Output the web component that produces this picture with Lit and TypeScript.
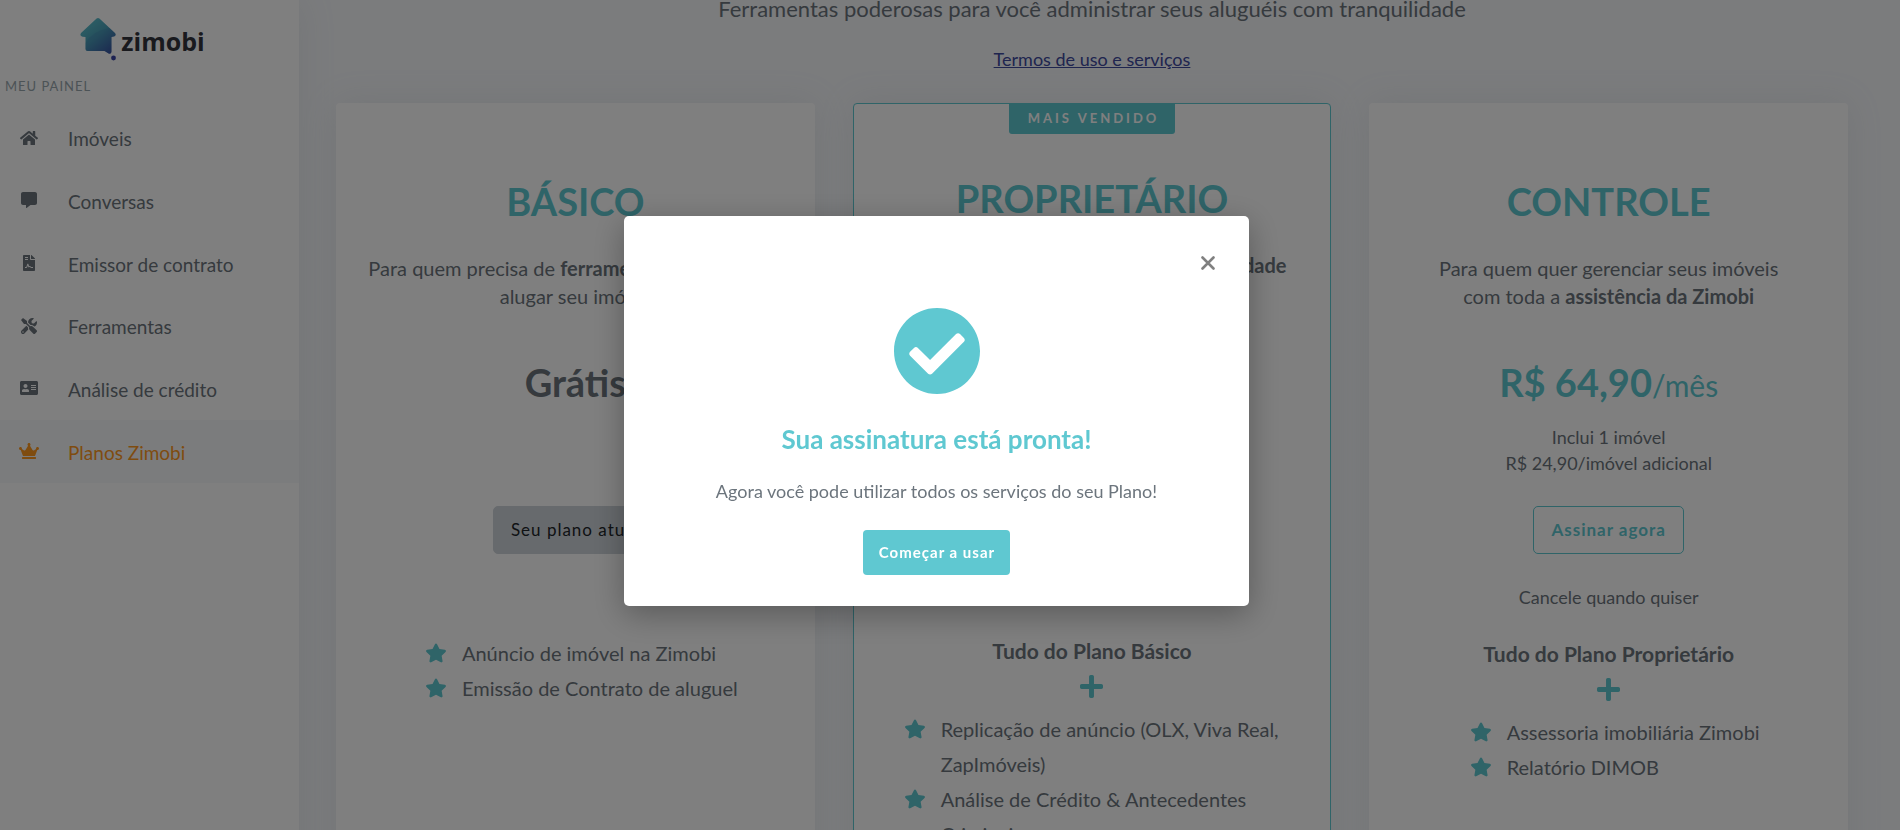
import { LitElement, html, svg, css, nothing } from "lit";
import type { TemplateResult } from "lit";
import { customElement, property, state } from "lit/decorators.js";
import { classMap } from "lit/directives/class-map.js";

type IconName = "home" | "chat" | "contract" | "tools" | "idcard" | "crown" | "star" | "plus" | "check";

const ICONS: Record<IconName, { box: string; d: string }> = {
  home: {
    box: "0 0 576 512",
    d: "M280.37 148.26L96 300.11V464a16 16 0 0 0 16 16l112.06-.29a16 16 0 0 0 15.92-16V368a16 16 0 0 1 16-16h64a16 16 0 0 1 16 16v95.64a16 16 0 0 0 16 16.05L464 480a16 16 0 0 0 16-16V300L295.67 148.26a12.19 12.19 0 0 0-15.3 0zM571.6 251.47L488 182.56V44.05a12 12 0 0 0-12-12h-56a12 12 0 0 0-12 12v72.61L318.47 43a48 48 0 0 0-61 0L4.34 251.47a12 12 0 0 0-1.6 16.9l25.5 31A12 12 0 0 0 45.15 301l235.22-193.74a12.19 12.19 0 0 1 15.3 0L530.9 301a12 12 0 0 0 16.9-1.6l25.5-31a12 12 0 0 0-1.7-16.93z",
  },
  chat: {
    box: "0 0 512 512",
    d: "M448 0H64C28.7 0 0 28.7 0 64v288c0 35.3 28.7 64 64 64h96v84c0 9.8 11.2 15.5 19.1 9.7L304 416h144c35.3 0 64-28.7 64-64V64c0-35.3-28.7-64-64-64z",
  },
  contract: {
    box: "0 0 384 512",
    d: "M224 136V0H24C10.7 0 0 10.7 0 24v464c0 13.3 10.7 24 24 24h336c13.3 0 24-10.7 24-24V160H248c-13.2 0-24-10.8-24-24zM64 64h96v32H64zM64 128h96v32H64zM64 384h24c12 0 20-6 24-18l22-68c7-20 34-20 41 0l20 60c20-14 46-8 58 14 4 8 10 12 19 12h48v32h-48c-20 0-38-10-47-29-4-8-15-8-19 0-8 16-30 14-36-3l-16-48-13 40c-8 24-28 40-53 40H64zM377 105L279 7c-4.500-4.500-10.600-7-17-7h-6v128h128v-6.100c0-6.300-2.500-12.400-7-16.900z",
  },
  tools: {
    box: "0 0 512 512",
    d: "M501.1 395.7L384 278.6c-23.1-23.1-57.6-27.6-85.4-13.9L192 158.1V96L64 0 0 64l96 128h62.1l106.600 106.600c-13.600 27.800-9.200 62.300 13.900 85.400l117.100 117.100c14.600 14.600 38.200 14.600 52.700 0l52.700-52.700c14.500-14.600 14.500-38.200 0-52.700zM331.700 225c28.300 0 54.900 11 74.900 31l19.400 19.400c15.800-6.900 30.800-16.500 43.800-29.500 37.100-37.100 49.700-89.300 37.900-136.700-2.200-9-13.500-12.100-20.100-5.500l-74.400 74.400-67.900-11.300L334 98.900l74.400-74.400c6.600-6.600 3.400-17.900-5.700-20.200-47.400-11.700-99.600.9-136.600 37.900-28.500 28.500-41.900 66.100-41.200 103.600l82.100 82.100c8.100-1.900 16.500-2.900 24.700-2.900zm-103.900 82l-56.700-56.700L18.700 402.800c-25 25-25 65.500 0 90.500s65.500 25 90.500 0l123.600-123.600c-7.600-19.900-9.900-41.600-5-62.700zM64 472c-13.200 0-24-10.800-24-24 0-13.300 10.700-24 24-24s24 10.700 24 24c0 13.200-10.700 24-24 24z",
  },
  idcard: {
    box: "0 0 576 512",
    d: "M528 32H48C21.500 32 0 53.500 0 80v352c0 26.500 21.500 48 48 48h480c26.500 0 48-21.500 48-48V80c0-26.500-21.500-48-48-48zM176 128c35.300 0 64 28.700 64 64s-28.700 64-64 64-64-28.700-64-64 28.700-64 64-64zm112 236.800c0 10.600-10 19.200-22.400 19.200H86.400C74 384 64 375.400 64 364.800v-19.200c0-31.800 30.100-57.600 67.200-57.600h5c24.600 10.600 54.200 11.200 79.600 0h5c37.100 0 67.200 25.800 67.200 57.600zM512 320H352v-32h160zM512 256H352v-32h160zM512 192H352v-32h160z",
  },
  crown: {
    box: "0 0 640 512",
    d: "M528 448H112c-8.800 0-16 7.200-16 16v32c0 8.800 7.200 16 16 16h416c8.800 0 16-7.200 16-16v-32c0-8.800-7.200-16-16-16zm64-320c-26.500 0-48 21.500-48 48 0 7.100 1.600 13.700 4.400 19.800L476 239.200c-15.400 9.200-35.300 4-44.200-11.600L350.300 85C361 76.200 368 63 368 48c0-26.500-21.500-48-48-48s-48 21.500-48 48c0 15 7 28.200 17.700 37l-81.500 142.600c-8.900 15.600-28.900 20.800-44.200 11.600l-72.300-43.400c2.700-6 4.400-12.700 4.400-19.800 0-26.500-21.500-48-48-48S0 149.500 0 176s21.500 48 48 48c2.600 0 5.200-.4 7.700-.8L128 416h384l72.300-192.800c2.500.4 5.100.8 7.700.8 26.500 0 48-21.500 48-48s-21.500-48-48-48z",
  },
  star: {
    box: "18 0 540 512",
    d: "M259.3 17.8L194 150.2 47.9 171.5c-26.200 3.800-36.700 36.100-17.700 54.600l105.700 103-25 145.500c-4.500 26.300 23.200 46 46.400 33.700L288 439.600l130.700 68.700c23.200 12.200 50.900-7.400 46.400-33.700l-25-145.500 105.700-103c19-18.500 8.500-50.800-17.700-54.600L382 150.200 316.700 17.800c-11.700-23.600-45.600-23.900-57.400 0z",
  },
  plus: {
    box: "0 32 448 448",
    d: "M416 208H272V64c0-17.670-14.330-32-32-32h-32c-17.670 0-32 14.330-32 32v144H32c-17.670 0-32 14.330-32 32v32c0 17.670 14.330 32 32 32h144v144c0 17.670 14.330 32 32 32h32c17.670 0 32-14.330 32-32V304h144c17.670 0 32-14.330 32-32v-32c0-17.670-14.330-32-32-32z",
  },
  check: {
    box: "8 8 496 496",
    d: "M504 256c0 136.967-111.033 248-248 248S8 392.967 8 256 119.033 8 256 8s248 111.033 248 248zM227.314 387.314l184-184c6.248-6.248 6.248-16.379 0-22.627l-22.627-22.627c-6.248-6.249-16.379-6.249-22.628 0L216 308.118l-70.059-70.059c-6.248-6.248-16.379-6.248-22.628 0l-22.627 22.627c-6.248 6.248-6.248 16.379 0 22.627l104 104c6.249 6.249 16.379 6.249 22.628.001z",
  },
};

const icon = (name: IconName) => html`
  <svg class="icon ${name}" viewBox=${ICONS[name].box} aria-hidden="true">
    ${svg`<path fill="currentColor" fill-rule="evenodd" d=${ICONS[name].d}></path>`}
  </svg>
`;

@customElement("side-menu")
class SideMenu extends LitElement {
  static styles = css`
    :host {
      display: block;
      background: #fff;
      box-shadow: 0 0 35px rgba(154, 161, 171, 0.15);
      z-index: 1;
    }
    .logo {
      display: flex;
      justify-content: center;
      padding: 17px 14px 0 0;
      height: 45px;
      text-decoration: none;
      color: #33353d;
    }
    .mark {
      width: 36px;
      height: 44px;
      flex: none;
    }
    .word {
      font: 700 25px/34px "Open Sans", sans-serif;
      padding: 7px 0 0 5px;
    }
    .heading {
      margin: 0;
      padding: 16px 5px 13px;
      font-size: 13px;
      line-height: 16px;
      font-weight: 400;
      letter-spacing: 1px;
      color: #98a6ad;
    }
    .items {
      margin: 0;
      padding: 0;
      list-style: none;
      display: grid;
      grid-template-rows: repeat(6, 1fr);
      height: 376px;
    }
    .link {
      display: grid;
      grid-template-columns: 58px 1fr;
      align-items: center;
      box-sizing: border-box;
      height: 100%;
      padding-top: 2px;
      font-size: 19px;
      line-height: 26px;
      color: #6c757d;
      text-decoration: none;
    }
    .link.active {
      background: #f6f8fb;
      color: #ff981f;
    }
    .glyph {
      display: flex;
      justify-content: center;
      padding-bottom: 3px;
    }
    .link > .text {
      padding-left: 10px;
    }
    .icon {
      display: block;
      height: 16px;
    }
  `;

  private items: { icon: IconName; text: string }[] = [
    { icon: "home", text: "Imóveis" },
    { icon: "chat", text: "Conversas" },
    { icon: "contract", text: "Emissor de contrato" },
    { icon: "tools", text: "Ferramentas" },
    { icon: "idcard", text: "Análise de crédito" },
    { icon: "crown", text: "Planos Zimobi" },
  ];

  render() {
    return html`
      <a class="logo" href="#" aria-label="zimobi">
        <svg class="mark" viewBox="0 0 36 44" aria-hidden="true">
          <defs>
            <linearGradient id="g" x1="0.1" y1="0" x2="0.9" y2="1">
              <stop offset="0" stop-color="#5fc8d1"></stop>
              <stop offset="0.5" stop-color="#4a9fb8"></stop>
              <stop offset="1" stop-color="#36479c"></stop>
            </linearGradient>
          </defs>
          <path
            fill="url(#g)"
            d="M16.600 1.600Q18 .4 19.400 1.600L34.700 15.700Q36.500 17.500 35 19Q34.600 19.600 31.500 20V34.500Q31.400 37.600 28.500 36.600L24.500 34H7.500Q5.500 34 5.500 32V20Q2 19.700 1 18.900Q-.3 17.400 1.300 15.800Z"
          ></path>
          <path
            fill="#3d6fae"
            fill-opacity="0.2"
            d="M5.500 26Q12 14 29.500 11L34.700 15.700Q36.500 17.500 35 19Q34.600 19.600 31.500 20V34.500Q31.400 37.600 28.500 36.600L24.500 34H7.500Q5.500 34 5.500 32Z"
          ></path>
          <circle cx="33.500" cy="41" r="2.400" fill="#3a45a4"></circle>
        </svg>
        <span class="word">zimobi</span>
      </a>
      <h2 class="heading">MEU PAINEL</h2>
      <nav>
        <ul class="items">
          ${this.items.map(
            (item, i) => html`<li>
              <a class=${classMap({ link: true, active: i === 5 })} href="#">
                <span class="glyph">${icon(item.icon)}</span>
                <span class="text">${item.text}</span>
              </a>
            </li>`
          )}
        </ul>
      </nav>
    `;
  }
}

interface Plan {
  name: string;
  pitch: TemplateResult;
  price: string;
  period?: string;
  notes: string[];
  action: string;
  kind: "current" | "outline";
  footnote?: string;
  base?: string;
  features: string[];
  badge?: string;
}

const PLANS: Plan[] = [
  {
    name: "BÁSICO",
    pitch: html`Para quem precisa de <strong>ferramentas simples</strong> para<br />alugar seu imóvel`,
    price: "Grátis",
    notes: [],
    action: "Seu plano atual",
    kind: "current",
    features: ["Anúncio de imóvel na Zimobi", "Emissão de Contrato de aluguel"],
  },
  {
    name: "PROPRIETÁRIO",
    badge: "MAIS VENDIDO",
    pitch: html`Para quem quer alugar com <strong>mais praticidade</strong><br />e segurança`,
    price: "R$ 34,90",
    period: "/mês",
    notes: ["Inclui 1 imóvel"],
    action: "Assinar agora",
    kind: "outline",
    base: "Tudo do Plano Básico",
    features: [
      "Replicação de anúncio (OLX, Viva Real, ZapImóveis)",
      "Análise de Crédito & Antecedentes Criminais",
    ],
  },
  {
    name: "CONTROLE",
    pitch: html`Para quem quer gerenciar seus imóveis<br />com toda a <strong>assistência da Zimobi</strong>`,
    price: "R$ 64,90",
    period: "/mês",
    notes: ["Inclui 1 imóvel", "R$ 24,90/imóvel adicional"],
    action: "Assinar agora",
    kind: "outline",
    footnote: "Cancele quando quiser",
    base: "Tudo do Plano Proprietário",
    features: ["Assessoria imobiliária Zimobi", "Relatório DIMOB"],
  },
];

@customElement("plan-card")
class PlanCard extends LitElement {
  @property({ attribute: false }) plan!: Plan;

  static styles = css`
    :host {
      display: block;
      min-width: 0;
    }
    .card {
      box-sizing: border-box;
      min-height: 100%;
      display: flex;
      flex-direction: column;
      align-items: center;
      padding: 75px 24px 24px;
      background: #fff;
      border-radius: 4px;
      box-shadow: 0 0 35px rgba(154, 161, 171, 0.15);
      text-align: center;
      font-size: 20px;
      line-height: 28px;
    }
    .card.featured {
      border: 1px solid #5fc8d1;
      padding-top: 0;
    }
    .badge {
      height: 30px;
      padding: 0 16px 0 19px;
      margin-bottom: 41px;
      border-radius: 0 0 3px 3px;
      background: #5fc8d1;
      color: #fff;
      font-size: 13px;
      line-height: 29px;
      font-weight: 700;
      letter-spacing: 3px;
    }
    .name {
      margin: 0;
      font-size: 38px;
      line-height: 46px;
      font-weight: 700;
      color: #5fc8d1;
    }
    .pitch {
      margin: 30px 0 49px;
      white-space: nowrap;
    }
    .price {
      font-size: 38px;
      line-height: 46px;
      font-weight: 700;
    }
    .price.paid {
      color: #5fc8d1;
    }
    .period {
      font-size: 30px;
      line-height: 40px;
      font-weight: 400;
    }
    .notes {
      margin: 19px 0 30px;
      min-height: 52px;
      font-size: 18px;
      line-height: 26px;
    }
    .action {
      height: 48px;
      padding: 0 17px;
      border: 1px solid #5fc8d1;
      border-radius: 5px;
      background: none;
      color: #5fc8d1;
      font: inherit;
      font-size: 17px;
      font-weight: 700;
      letter-spacing: 1px;
    }
    .action.current {
      border-color: #ced4da;
      background: #ced4da;
      color: #212529;
      font-weight: 400;
    }
    .footnote {
      margin: 30px 0 26px;
      min-height: 26px;
      font-size: 18px;
      line-height: 26px;
    }
    .base {
      font-size: 21px;
      font-weight: 700;
      line-height: 35px;
    }
    .icon {
      display: block;
      color: #5fc8d1;
    }
    .plus {
      width: 23px;
      height: 23px;
      margin: 7px 0 14px;
    }
    .features {
      margin: 0 14px;
      padding: 0 0 0 13px;
      list-style: none;
      text-align: left;
      line-height: 35px;
    }
    .feature {
      display: grid;
      grid-template-columns: 20px 1fr;
      gap: 16px;
    }
    .star {
      width: 20px;
      height: 34px;
    }
  `;

  render() {
    const p = this.plan;
    return html`
      <article class=${classMap({ card: true, featured: !!p.badge })}>
        ${p.badge ? html`<div class="badge">${p.badge}</div>` : nothing}
        <h3 class="name">${p.name}</h3>
        <div class="pitch">${p.pitch}</div>
        <div class=${classMap({ price: true, paid: !!p.period })}>
          ${p.price}${p.period ? html`<span class="period">${p.period}</span>` : nothing}
        </div>
        <div class="notes">${p.notes.map((n) => html`<div>${n}</div>`)}</div>
        <button class="action ${p.kind}" type="button">${p.action}</button>
        <div class="footnote">${p.footnote ?? nothing}</div>
        ${p.base ? html`<div class="base">${p.base}</div>${icon("plus")}` : nothing}
        <ul class="features">
          ${p.features.map((f) => html`<li class="feature">${icon("star")}<span>${f}</span></li>`)}
        </ul>
      </article>
    `;
  }
}

@customElement("success-dialog")
class SuccessDialog extends LitElement {
  static styles = css`
    :host {
      position: fixed;
      inset: 0;
      z-index: 10;
      display: flex;
      align-items: center;
      justify-content: center;
      box-sizing: border-box;
      padding: 0 27px 8px 0;
      background: rgba(0, 0, 0, 0.5);
    }
    .panel {
      box-sizing: border-box;
      width: 625px;
      max-width: 100%;
      display: flex;
      flex-direction: column;
      align-items: center;
      padding: 31px 25px 31px;
      border-radius: 5px;
      background: #fff;
      box-shadow: 0 8px 32px rgba(0, 0, 0, 0.3);
      text-align: center;
    }
    .close {
      align-self: flex-end;
      display: grid;
      place-items: center;
      width: 32px;
      height: 32px;
      padding: 0;
      border: 0;
      background: none;
      color: #808080;
    }
    .cross {
      width: 14px;
      height: 14px;
    }
    .check {
      display: block;
      width: 86px;
      height: 86px;
      margin: 29px 0 28px;
      color: #5fc8d1;
    }
    .title {
      margin: 0 0 22px;
      font-size: 26px;
      line-height: 34px;
      font-weight: 700;
      color: #5fc8d1;
    }
    .message {
      margin: 0 0 26px;
      font-size: 18px;
      line-height: 26px;
    }
    .start {
      height: 45px;
      padding: 0 15px 2px 16px;
      border: 0;
      border-radius: 4px;
      background: #5fc8d1;
      color: #fff;
      font: inherit;
      font-size: 15px;
      font-weight: 700;
      letter-spacing: 1px;
    }
  `;

  private close() {
    this.dispatchEvent(new CustomEvent("dismiss", { bubbles: true, composed: true }));
  }

  render() {
    return html`
      <section class="panel" role="dialog" aria-modal="true" aria-labelledby="title">
        <button class="close" type="button" aria-label="Fechar" @click=${this.close}>
          <svg class="cross" viewBox="0 0 14 14" aria-hidden="true">
            <path d="M1.500 1.500L12.500 12.500M12.500 1.500L1.500 12.500" stroke="currentColor" stroke-width="2.600" stroke-linecap="round"></path>
          </svg>
        </button>
        ${icon("check")}
        <h2 class="title" id="title">Sua assinatura está pronta!</h2>
        <p class="message">Agora você pode utilizar todos os serviços do seu Plano!</p>
        <button class="start" type="button" @click=${this.close}>Começar a usar</button>
      </section>
    `;
  }
}

@customElement("app-root")
class AppRoot extends LitElement {
  @state() private dialogOpen = true;

  static styles = css`
    :host {
      display: grid;
      grid-template-columns: 299px 1fr;
      height: 100vh;
      overflow: hidden;
      background: #f6f8fb;
      color: #6c757d;
      font-family: Lato, "Liberation Sans", sans-serif;
    }
    .content {
      min-width: 0;
      display: flex;
      flex-direction: column;
      padding: 0 52px 0 37px;
      text-align: center;
    }
    .lead {
      margin: 0;
      font-size: 22px;
      line-height: 18px;
    }
    .terms {
      align-self: center;
      margin: 28px 0 31px;
      font-size: 18px;
      line-height: 26px;
      color: #3f4a9e;
    }
    .plans {
      flex: 1;
      display: grid;
      grid-template-columns: repeat(3, 1fr);
      gap: 38px;
    }
  `;

  render() {
    return html`
      <side-menu></side-menu>
      <main class="content">
        <p class="lead">Ferramentas poderosas para você administrar seus aluguéis com tranquilidade</p>
        <a class="terms" href="#">Termos de uso e serviços</a>
        <div class="plans">${PLANS.map((p) => html`<plan-card .plan=${p}></plan-card>`)}</div>
      </main>
      ${this.dialogOpen
        ? html`<success-dialog @dismiss=${() => (this.dialogOpen = false)}></success-dialog>`
        : nothing}
    `;
  }
}
